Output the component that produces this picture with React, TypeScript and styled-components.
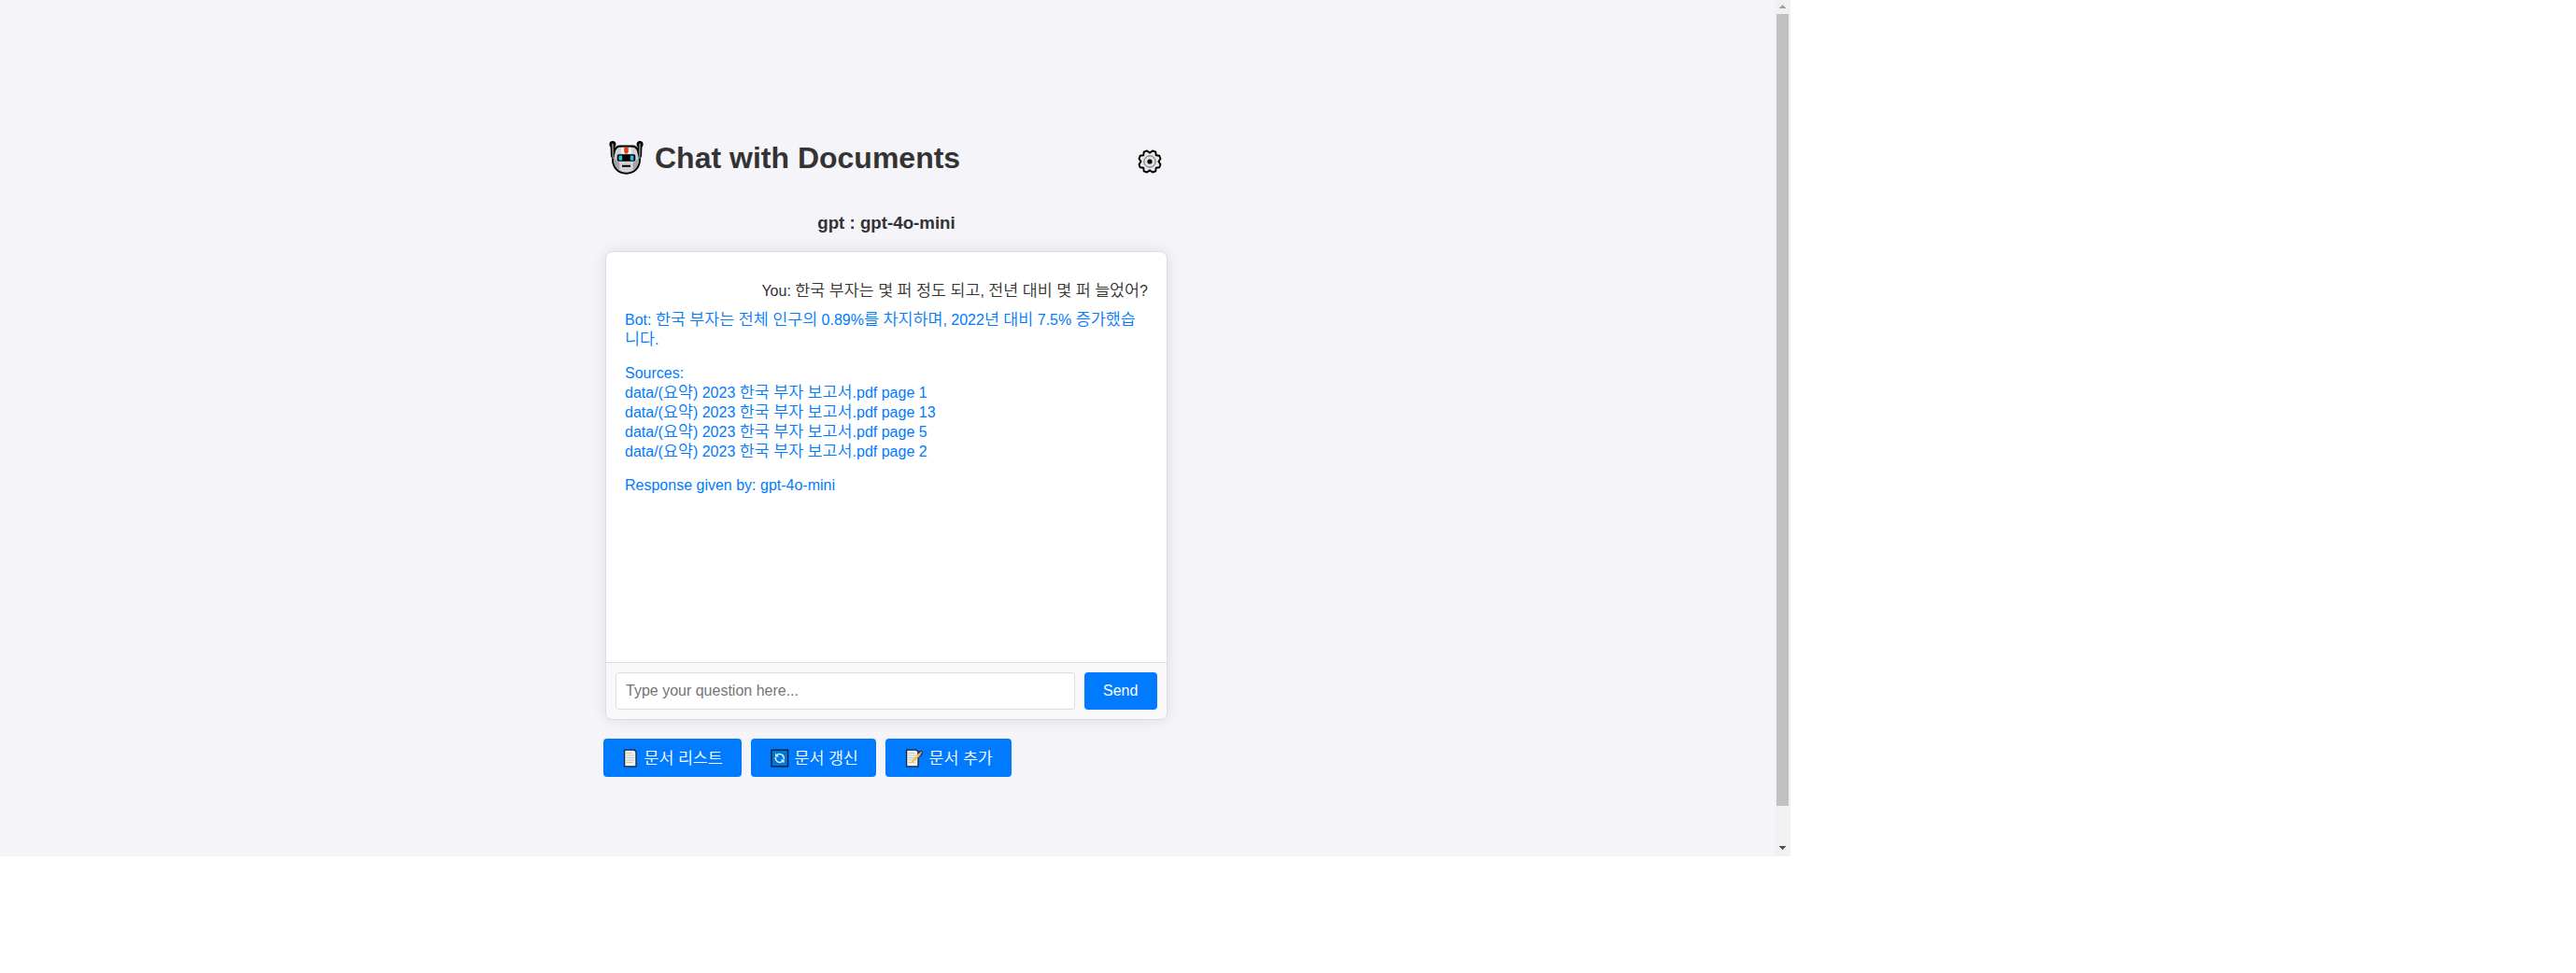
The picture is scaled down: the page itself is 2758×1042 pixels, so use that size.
import React from 'react';
import styled, { createGlobalStyle } from 'styled-components';

const Global = createGlobalStyle`
  * { box-sizing: border-box; }
  body { margin: 0; background: #fff; font-family: "Liberation Sans", "Noto Sans CJK KR", sans-serif; color: #333; }
`;
const Viewport = styled.div`display: flex; width: 1917px; height: 917px;`;
const Page = styled.main`
  width: 1900px; background: #f4f4f9; padding: 140px 650px 0 646px;
  display: flex; flex-direction: column;
`;
const Header = styled.header`
  display: flex; align-items: center; height: 58px; width: 604px; padding: 0 6px;
`;
const Title = styled.h1`margin: 0 auto 0 12px; font-size: 32px; line-height: 37px; font-weight: bold;`;
const Model = styled.h2`margin: 30px 0 0; width: 606px; text-align: center; font-size: 18.72px; line-height: 22px;`;
const ChatBox = styled.section`
  width: 602px; height: 502px; margin: 19px 0 0 2px; border: 1px solid #ddd; border-radius: 8px;
  background: #fff; box-shadow: 0 0 15px rgba(0,0,0,.1); overflow: hidden;
  display: flex; flex-direction: column;
`;
const Messages = styled.div`flex: 1; padding: 31px 20px 0;`;
const Message = styled.div<{ $bot?: boolean }>`
  font-size: 16px; line-height: 21px; margin-bottom: 10px; word-break: break-all;
  color: ${p => (p.$bot ? '#007bff' : '#333')};
  text-align: ${p => (p.$bot ? 'left' : 'right')};
`;
const Para = styled.p`margin: 0 0 15px;`;
const Hangul = styled.span`
  font-family: "Noto Sans CJK KR", sans-serif; font-size: 17.39px; font-weight: 350; line-height: 0;
`;
const InputRow = styled.form`
  display: flex; gap: 10px; padding: 10px; border-top: 1px solid #ddd; background: #f9f9f9;
`;
const Input = styled.input`
  flex: 1; min-width: 0; height: 40px; padding: 0 10px; border: 1px solid #ddd; border-radius: 4px;
  font: 16px "Liberation Sans", sans-serif; background: #fff;
  &::placeholder { color: #757575; }
`;
const Button = styled.button<{ $w: number; $h: number }>`
  display: flex; align-items: center; gap: 4.45px;
  width: ${p => p.$w}px; height: ${p => p.$h}px; padding: 0 0 0 20px; border: 0; border-radius: 4px;
  background: #007bff; color: #fff; white-space: nowrap;
  font: 16px/20px "Liberation Sans", "Noto Sans CJK KR", sans-serif;
`;
const Actions = styled.div`
  display: flex; gap: 10px; margin-top: 20px;
  ${Button} { padding-top: 2px; }
`;
const Icon = styled.svg`display: block; flex: none; margin-top: -1px;`;
const GearIcon = styled.svg`display: block; flex: none; margin-top: 7px;`;
const Scrollbar = styled.div`
  width: 17px; background: #f1f1f1; display: flex; flex-direction: column; align-items: center;
  padding: 5px 0 7px;
`;
const Thumb = styled.div`width: 13px; height: 848px; margin: 6px 0 43px; background: #c1c1c1;`;
const Arrow = styled.svg`display: block; width: 7px; height: 4px;`;

const Text = ({ children }: { children: string }) => (
  <span>
    {children.split(/([가-힣]+)/).map((part, i) => (i % 2 ? <Hangul key={i}>{part}</Hangul> : part))}
  </span>
);

const Robot = () => (
  <svg width="37" height="36" viewBox="0 0 37 36" strokeLinejoin="round" strokeLinecap="round">
    <path d="M3.800 3l.4 13M33.200 3l-.4 13" fill="none" stroke="#000" strokeWidth="4.600" />
    <circle cx="3.900" cy="3.500" r="3.500" fill="#000" />
    <circle cx="33.100" cy="3.500" r="3.500" fill="#000" />
    <path d="M11.500 5.600h14q3.500 0 5.500 4.400l2 9.500c0 9.400-6.400 15.200-14.500 15.200S4 28.900 4 19.500L6 10q2-4.400 5.500-4.400z" fill="#d2d2d2" stroke="#000" strokeWidth="2.100" />
    <path d="M3.900 3.500l.5 14.500M33.100 3.500l-.5 14.500" fill="none" stroke="#777" strokeWidth="1.900" />
    <path d="M5.200 18l6 5.500v8C7.500 29 5.200 25 5.200 20.500zM31.800 18l-6 5.500v8c3.700-2.500 6-6.500 6-11z" fill="#a3a3a3" />
    <path d="M13 6.800h11v6.700H13z" fill="#f4f4f4" />
    <path d="M16.200 6.800h4.600v4.700l-1.100 2h-2.400l-1.100-2z" fill="#f03a17" />
    <rect x="8.700" y="14.200" width="19.600" height="7.600" rx="1.800" fill="#000" />
    <rect x="10.500" y="15.400" width="3.700" height="5.300" rx="1.200" fill="#26bff2" />
    <rect x="22.800" y="15.400" width="3.700" height="5.300" rx="1.200" fill="#26bff2" />
    <path d="M14 26.800h9" stroke="#000" strokeWidth="2" strokeLinecap="butt" />
  </svg>
);
const Gear = () => (
  <GearIcon width="26" height="26" viewBox="0 0 26 26">
    <path d="M10 1.500L13 3.600 16 1.500 19.300 2.700 19.700 6.300 23.300 6.700 24.500 10 22.400 13 24.500 16 23.300 19.300 19.700 19.700 19.300 23.300 16 24.500 13 22.400 10 24.500 6.700 23.300 6.300 19.700 2.700 19.300 1.500 16 3.600 13 1.500 10 2.700 6.700 6.300 6.300 6.700 2.700z" fill="#e9e9e9" stroke="#000" strokeWidth="1.900" strokeLinejoin="round" />
    <circle cx="13" cy="13" r="6.200" fill="#e0e0e0" stroke="#444" strokeWidth=".8" />
    <circle cx="13" cy="13" r="2.600" fill="#000" />
  </GearIcon>
);
const DocIcon = ({ pencil = false }: { pencil?: boolean }) => (
  <Icon width={pencil ? 22 : 19} height="20" viewBox={pencil ? '0 0 22 20' : '0 0 19 20'}>
    <path d="M2.600 1.200h10.600l1.800 1.800v15.800H2.600z" fill="#f2f2f2" stroke="#17233a" strokeWidth="1.300" />
    <path d="M4.500 4.500h6.500M4.500 7h8.500M4.500 9.500h8.500M4.500 12h8.500M4.500 14.500h7" stroke="#c4c4c4" />
    {pencil && <>
      <path d="M16.200 6.500L18 4" stroke="#17233a" strokeWidth="4" strokeLinecap="round" />
      <path d="M7 15.500l1.200-3 7.800-8 1.800 1.800-7.800 8z" fill="#fbc44e" />
      <path d="M16.600 5.400l1.600-1.600" stroke="#e9a66b" strokeWidth="1.800" strokeLinecap="round" />
    </>}
  </Icon>
);
const Refresh = () => (
  <Icon width="22" height="20" viewBox="0 0 22 20">
    <rect x="2" y="1.200" width="17.600" height="17.600" fill="#0078d7" stroke="#08223f" strokeWidth="1.500" />
    <path d="M7.600 6.800a4.600 4.600 0 0 1 7.600 4.200M14 13.200a4.600 4.600 0 0 1-7.600-4.200" fill="none" stroke="#d7efff" strokeWidth="1.500" />
    <path d="M6 4.500v4h4zM15.600 15.500v-4h-4z" fill="#d7efff" />
  </Icon>
);

const sources = [1, 13, 5, 2];

export default function App() {
  return (
    <>
      <Global />
      <Viewport>
        <Page>
          <Header><Robot /><Title>Chat with Documents</Title><Gear /></Header>
          <Model>gpt : gpt-4o-mini</Model>
          <ChatBox>
            <Messages>
              <Message><Text>You: 한국 부자는 몇 퍼 정도 되고, 전년 대비 몇 퍼 늘었어?</Text></Message>
              <Message $bot>
                <Para><Text>Bot: 한국 부자는 전체 인구의 0.89%를 차지하며, 2022년 대비 7.5% 증가했습니다.</Text></Para>
                <Para>
                  Sources:
                  {sources.map(n => (
                    <React.Fragment key={n}><br /><Text>{`data/(요약) 2023 한국 부자 보고서.pdf page ${n}`}</Text></React.Fragment>
                  ))}
                </Para>
                <Para>Response given by: gpt-4o-mini</Para>
              </Message>
            </Messages>
            <InputRow>
              <Input placeholder="Type your question here..." />
              <Button type="button" $w={78} $h={40}>Send</Button>
            </InputRow>
          </ChatBox>
          <Actions>
            <Button $w={148} $h={41}><DocIcon /><Text>문서 리스트</Text></Button>
            <Button $w={134} $h={41}><Refresh /><Text>문서 갱신</Text></Button>
            <Button $w={135} $h={41}><DocIcon pencil /><Text>문서 추가</Text></Button>
          </Actions>
        </Page>
        <Scrollbar>
          <Arrow viewBox="0 0 7 4"><path d="M3 0h1v1h1v1h1v1h1v1H0V3h1V2h1V1h1z" fill="#a3a3a3" /></Arrow>
          <Thumb />
          <Arrow viewBox="0 0 7 4"><path d="M0 0h7v1H6v1H5v1H4v1H3V3H2V2H1V1H0z" fill="#505050" /></Arrow>
        </Scrollbar>
      </Viewport>
    </>
  );
}
